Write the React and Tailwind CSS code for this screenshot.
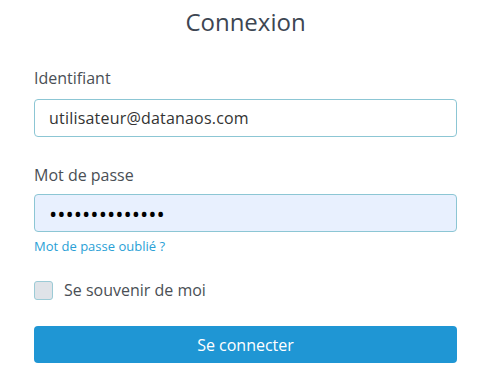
import React, { useState } from 'react';

export default function App() {
  const [remember, setRemember] = useState(false);

  return (
    <div className="min-h-screen bg-white font-['Open_Sans',sans-serif]">
      <div className="ml-[34px] w-[423px] pt-[4px]">
        <h1 className="text-center text-[24px] leading-[36px] text-[#3d4652]">Connexion</h1>

        {/* Identifiant */}
        <label className="mt-[26px] block text-[16px] leading-[24px] text-[#4a4f55]">Identifiant</label>
        <input
          type="text"
          defaultValue="utilisateur@datanaos.com"
          className="mt-[9px] block h-[38px] w-full rounded-[4px] border border-[#8cc6d4] bg-white px-[14px] text-[16px] tracking-[0.2px] text-[#333] outline-none"
        />

        {/* Mot de passe */}
        <label className="mt-[26px] block text-[16px] leading-[24px] text-[#4a4f55]">Mot de passe</label>
        <input
          type="password"
          defaultValue="motdepasse1234"
          className="mt-[7px] block h-[38px] w-full rounded-[4px] border border-[#8cc6d4] bg-[#e8f0fe] px-[14px] text-[22px] text-black outline-none"
        />
        <a href="#" className="mt-[4px] block text-[13px] leading-[20px] text-[#2a9fd6]">
          Mot de passe oublié ?
        </a>

        {/* Se souvenir */}
        <label className="mt-[22px] flex items-center gap-[11px] text-[16px] leading-[24px] text-[#4a4f55]">
          <span
            onClick={() => setRemember(!remember)}
            className="block h-[19px] w-[19px] rounded-[3px] border border-[#9ccbd6] bg-[#dfe3e8]"
          />
          Se souvenir de moi
        </label>

        <button className="mt-[24px] block h-[37px] w-full rounded-[4px] bg-[#1f96d4] text-[16px] text-white">
          Se connecter
        </button>
      </div>
    </div>
  );
}
